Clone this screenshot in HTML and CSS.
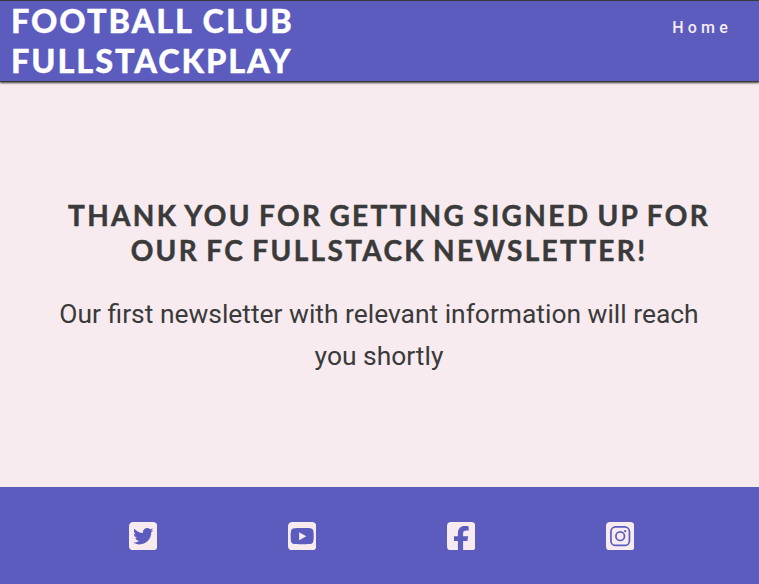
FILE: index.html
```html
<!DOCTYPE html>
<html lang="en">
<head>
<meta charset="utf-8">
<title>Football Club Fullstackplay</title>
<link rel="stylesheet" href="styles.css">
</head>
<body>
<header class="header">
  <h1 class="logo"><span>FOOTBALL CLUB</span><span>FULLSTACKPLAY</span></h1>
  <nav class="nav"><a class="nav-link">Home</a></nav>
</header>
<main class="main">
  <h2 class="title"><span>THANK YOU FOR GETTING SIGNED UP FOR</span><span>OUR FC FULLSTACK NEWSLETTER!</span></h2>
  <p class="message">Our first newsletter with relevant information will reach<br>you shortly</p>
</main>
<footer class="footer">
  <a class="social" aria-label="Twitter"><svg viewBox="0 32 448 448"><path d="M384 32H64C28.700 32 0 60.700 0 96v320c0 35.300 28.700 64 64 64h320c35.300 0 64-28.700 64-64V96c0-35.300-28.700-64-64-64zm-32.900 158.800c.2 2.800.2 5.700.2 8.500 0 86.700-66 186.600-186.600 186.600-37.200 0-71.700-10.800-100.700-29.400 5.300.6 10.400.8 15.800.8 30.700 0 58.900-10.400 81.400-28-28.800-.6-53-19.500-61.300-45.500 10.100 1.500 19.200 1.500 29.600-1.200-30-6.100-52.500-32.500-52.500-64.400v-.8c8.700 4.900 18.900 7.900 29.600 8.300a65.447 65.447 0 0 1-29.200-54.600c0-12.200 3.200-23.400 8.900-33.100 32.300 39.800 80.800 65.800 135.200 68.600-9.300-44.500 24-80.600 64-80.600 18.900 0 35.900 7.900 47.900 20.700 14.800-2.800 29-8.300 41.600-15.800-4.900 15.200-15.200 28-28.800 36.100 13.200-1.400 26-5.100 37.800-10.200-8.900 13.100-20.100 24.700-32.900 34z"/></svg></a>
  <a class="social" aria-label="YouTube"><svg viewBox="0 32 448 448"><path d="M176 192l112 64-112 64V192zM448 96v320c0 35.300-28.700 64-64 64H64c-35.300 0-64-28.700-64-64V96c0-35.300 28.700-64 64-64h320c35.300 0 64 28.700 64 64zm-42 160.300s0-59.600-7.600-88.200c-4.200-15.800-16.500-28.200-32.200-32.400C337.900 128 224 128 224 128s-113.900 0-142.200 7.700c-15.700 4.200-28 16.600-32.200 32.400-7.600 28.500-7.600 88.200-7.600 88.200s0 59.600 7.600 88.200c4.200 15.800 16.500 27.700 32.200 31.900C110.100 384 224 384 224 384s113.900 0 142.200-7.700c15.700-4.200 28-16.100 32.200-31.900 7.600-28.500 7.600-88.100 7.600-88.100z"/></svg></a>
  <a class="social" aria-label="Facebook"><svg viewBox="0 32 448 448"><path d="M384 32H64A64 64 0 0 0 0 96v320a64 64 0 0 0 64 64h108V333h-62v-77h62v-42c0-78 40-118 113-118 21 0 44 3 57 6v67c-10-1-22-2-36-2-37 0-52 15-52 49v40h80l-13 77h-67v147H384a64 64 0 0 0 64-64V96a64 64 0 0 0-64-64z"/></svg></a>
  <a class="social" aria-label="Instagram"><svg viewBox="0 32 448 448"><rect y="32" width="448" height="448" rx="64"/><g class="cutout"><rect x="78" y="110" width="292" height="292" rx="76"/><circle cx="224" cy="256" r="68"/></g><circle class="lens" cx="303" cy="177" r="18"/></svg></a>
</footer>
</body>
</html>
```
FILE: styles.css
```css
* { box-sizing: border-box; }
body {
  margin: 0;
  height: 584px;
  display: flex;
  flex-direction: column;
  background: #f7ebef;
  color: #3a3a3a;
  font-family: Roboto, sans-serif;
}
.header {
  height: 82px;
  display: flex;
  justify-content: space-between;
  background: #5c5cbf;
  border-top: 1px solid #3a3a3a;
  border-bottom: 1px solid #3a3a3a;
  box-shadow: 0 1px 2px #3a3a3a;
}
.logo, .title {
  margin: 0;
  font-family: Lato, sans-serif;
  white-space: nowrap;
}
.logo span, .title span { display: block; }
.logo {
  padding: 0 0 0 11px;
  color: #fff;
  font-size: 32.500px;
  font-weight: 900;
  line-height: 40px;
  letter-spacing: 1.900px;
  -webkit-text-stroke: 0.300px #fff;
}
.nav { padding: 17px 27px 0 0; }
.nav-link {
  color: #f7ebef;
  font-size: 16px;
  font-weight: 500;
  line-height: 20px;
  letter-spacing: 4.200px;
}
.main { flex: 1; padding-top: 116px; }
.title {
  padding-left: 19px;
  font-size: 28px;
  font-weight: 700;
  line-height: 35px;
  text-align: center;
  letter-spacing: 2.350px;
  word-spacing: -2px;
  -webkit-text-stroke: 0.500px #3a3a3a;
}
.message {
  margin: 25px 1px 0 0;
  font-size: 26.400px;
  line-height: 42px;
  text-align: center;
}
.footer {
  height: 97px;
  padding: 1px 59.200px 0 63.400px;
  display: grid;
  grid-template-columns: repeat(4, 1fr);
  place-items: center;
  background: #5c5cbf;
}
.social, .social svg { display: block; width: 28.400px; height: 28.400px; }
.social svg { fill: #f7ebef; }
.social .cutout { fill: none; stroke: #5c5cbf; stroke-width: 27; }
.social .lens { fill: #5c5cbf; }
```
